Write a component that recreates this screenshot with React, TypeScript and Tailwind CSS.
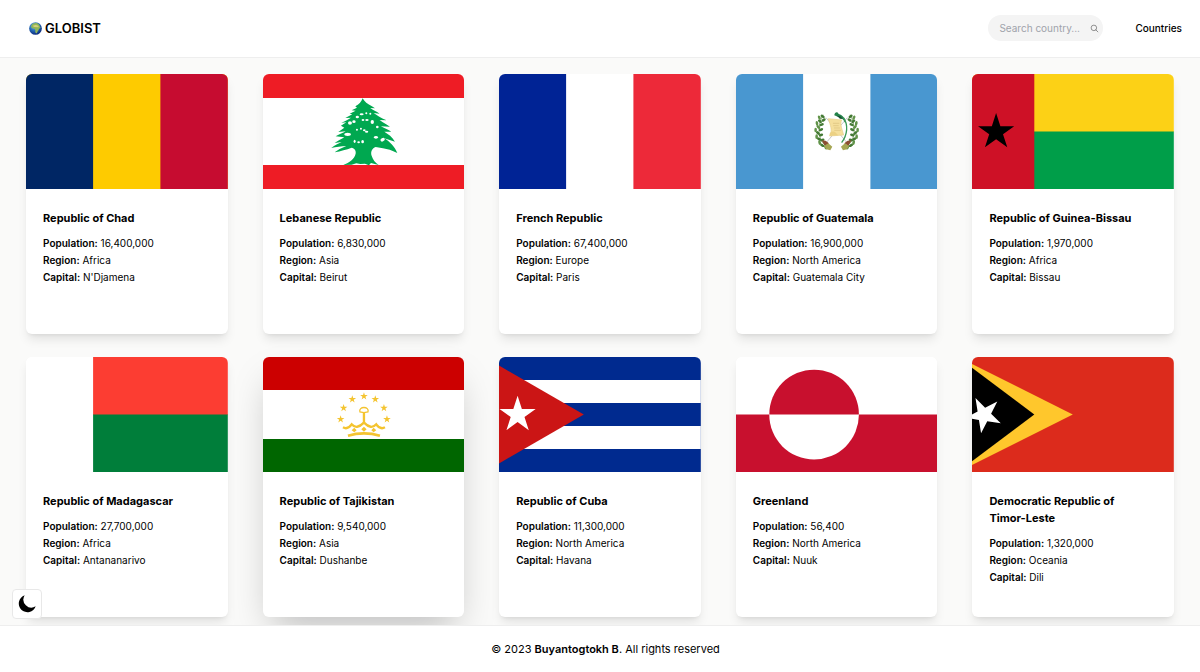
import type { ReactNode } from "react";
import { IoSearchOutline } from "react-icons/io5";

function starPoints(cx: number, cy: number, r: number, start = -90) {
  const points: string[] = [];
  for (let i = 0; i < 10; i++) {
    const radius = i % 2 === 0 ? r : r * 0.382;
    const angle = ((start + i * 36) * Math.PI) / 180;
    points.push(`${(cx + radius * Math.cos(angle)).toFixed(2)},${(cy + radius * Math.sin(angle)).toFixed(2)}`);
  }
  return points.join(" ");
}

function Flag({ label, children }: { label: string; children: ReactNode }) {
  return (
    <svg
      role="img"
      aria-label={label}
      viewBox="0 0 202 115"
      preserveAspectRatio="xMidYMid slice"
      className="block h-[115px] w-full rounded-t-md"
    >
      {children}
    </svg>
  );
}

function VerticalBands({ colors }: { colors: [string, string, string] }) {
  return (
    <>
      <rect width="202" height="115" fill={colors[1]} />
      <rect width="67.3" height="115" fill={colors[0]} />
      <rect x="134.6" width="67.4" height="115" fill={colors[2]} />
    </>
  );
}

function Lebanon() {
  return (
    <>
      <rect width="202" height="115" fill="#fff" />
      <rect width="202" height="24" fill="#ee1c25" />
      <rect y="91" width="202" height="24" fill="#ee1c25" />
      <g transform="translate(47.5 11) scale(.3333)">
        <path
          fill="#00a850"
          d="M157 40 C162 50 172 57 185 64 L194 70 L180 69 C188 76 198 79 208 86 L190 84 C202 92 208 97 218 101 L229 106 L208 105 C220 114 228 118 239 125 L212 124 C224 130 234 134 243 140 L222 140 C234 147 246 156 254 170 L222 160 C238 170 254 186 261 204 C244 196 232 192 218 190 L196 186 C186 190 180 200 184 212 C188 224 194 232 205 240 L182 234 L176 241 L164 236 L150 237 L138 235 L124 239 L99 240 C118 232 132 222 136 206 C138 196 132 190 124 188 C108 194 92 198 73 202 L88 192 L108 183 C92 184 78 186 63 189 C74 180 84 176 94 171 L73 174 C84 166 94 162 102 157 L76 154 C88 148 98 144 106 139 L84 141 L102 128 L92 122 L108 112 L93 113 C106 107 114 104 122 98 L105 99 L126 88 L118 86 L136 77 L124 76 L140 68 L135 64 C146 58 153 51 157 40 Z"
        />
        <g fill="#fff">
          <ellipse cx="112" cy="148" rx="10" ry="5" />
          <ellipse cx="119" cy="114" rx="6" ry="5" />
          <ellipse cx="131" cy="110" rx="5" ry="4" />
          <ellipse cx="141" cy="96" rx="5" ry="4" />
          <ellipse cx="154" cy="88" rx="6" ry="3" />
          <circle cx="168" cy="85" r="3" />
          <circle cx="180" cy="86" r="3" />
          <ellipse cx="158" cy="105" rx="4" ry="3" />
          <ellipse cx="170" cy="105" rx="5" ry="3" />
          <ellipse cx="186" cy="111" rx="5" ry="6" />
          <circle cx="201" cy="126" r="4" />
          <circle cx="140" cy="134" r="3" />
          <circle cx="152" cy="131" r="3" />
          <ellipse cx="162" cy="136" rx="4" ry="3" />
          <ellipse cx="169" cy="140" rx="5" ry="3" />
          <ellipse cx="197" cy="157" rx="6" ry="4" />
          <ellipse cx="217" cy="164" rx="7" ry="5" transform="rotate(-30 217 164)" />
          <ellipse cx="133" cy="169" rx="3" ry="5" />
          <ellipse cx="145" cy="172" rx="4" ry="3" />
          <ellipse cx="157" cy="170" rx="4" ry="5" />
        </g>
      </g>
    </>
  );
}

const laurelLeaves = [
  [76, 172, 20], [66, 166, 60], [58, 158, 15], [56, 147, 60], [49, 140, 0], [53, 129, 50],
  [46, 120, 0], [54, 111, 45], [50, 100, 10], [59, 94, 50], [57, 83, 20], [67, 79, 55],
  [66, 150, 110], [62, 135, 110], [62, 119, 110], [64, 104, 115], [70, 90, 120],
];

function Laurel() {
  return (
    <g>
      <path d="M88 174 C56 160 46 118 68 74" fill="none" stroke="#5b8b3f" strokeWidth="2" />
      {laurelLeaves.map(([x, y, angle]) => (
        <ellipse
          key={`${x}-${y}`}
          cx={x}
          cy={y}
          rx="4"
          ry="7"
          fill={angle > 45 ? "#447a35" : "#62944a"}
          transform={`rotate(${-angle} ${x} ${y})`}
        />
      ))}
    </g>
  );
}

function Guatemala() {
  return (
    <>
      <VerticalBands colors={["#4997d0", "#fff", "#4997d0"]} />
      <g transform="translate(64.5 16) scale(.3333)">
        <Laurel />
        <g transform="translate(218 0) scale(-1 1)">
          <Laurel />
        </g>
        <g stroke="#a9a9ae" strokeWidth="2" fill="none">
          <path d="M77 83 L140 158 M141 83 L78 158" />
        </g>
        <path d="M64 151 L76 152 L86 160 L74 168 Z M154 151 L142 152 L132 160 L144 168 Z" fill="#8b4d32" />
        <path d="M72 168 L84 160 L96 170 L90 181 L78 178 Z M146 168 L134 160 L122 170 L128 181 L140 178 Z" fill="#a6a653" />
        <path d="M84 86 L124 90 C118 104 126 118 130 135 L88 138 C98 122 90 106 84 86 Z" fill="#f5df9c" stroke="#e6cd88" strokeWidth="2" />
        <path d="M88 137 C86 128 94 122 104 126 L114 136" fill="#ecd184" />
        <path d="M98 100 H117 M99 107 H115 M101 114 H119 M102 121 H122" stroke="#d9bf7c" strokeWidth="2" />
        <path d="M102 76 C103 66 112 64 115 72 C128 76 136 85 134 98 C130 88 123 82 114 81 Z" fill="#24824a" />
        <path d="M130 84 C144 104 142 134 124 158" fill="none" stroke="#3b9a58" strokeWidth="4" />
        <path d="M110 77 L120 79 L128 87 L119 86 Z" fill="#174f34" />
      </g>
    </>
  );
}

function GuineaBissau() {
  return (
    <>
      <rect width="202" height="58" fill="#fcd116" />
      <rect y="57.5" width="202" height="57.5" fill="#009e49" />
      <rect width="62.5" height="115" fill="#ce1126" />
      <polygon points={starPoints(24.3, 58, 19)} fill="#000" />
    </>
  );
}

function Madagascar() {
  return (
    <>
      <rect width="202" height="115" fill="#fff" />
      <rect x="67.3" width="134.7" height="58" fill="#fc3d32" />
      <rect x="67.3" y="57.5" width="134.7" height="57.5" fill="#007e3a" />
    </>
  );
}

const crownStars = [
  [271, 208], [280, 174], [306, 148], [341, 139], [375, 148], [401, 174], [410, 208],
];

function Tajikistan() {
  return (
    <>
      <rect width="202" height="115" fill="#fff" />
      <rect width="202" height="33" fill="#c00" />
      <rect y="82" width="202" height="33" fill="#060" />
      <g transform="translate(-12.5 -7) scale(.3333)" fill="#f4c430">
        {crownStars.map(([x, y]) => (
          <polygon key={x} points={starPoints(x, y, 12)} />
        ))}
        <g fill="none" stroke="#f4c430">
          <path d="M293 257 Q341 243 389 257" strokeWidth="8" />
          <path d="M278 232 Q292 240 304 223 Q319 240 341 218 Q363 240 378 223 Q390 240 404 232" strokeWidth="7" />
          <path d="M341 188 V222" strokeWidth="7" />
          <path d="M329 186 C323 168 359 168 353 186 L341 188 Z" strokeWidth="4" />
        </g>
        <path d="M312 233 L319 241 L312 247 L304 241 Z M341 230 L349 238 L341 245 L333 238 Z M370 233 L378 241 L370 247 L363 241 Z" />
      </g>
    </>
  );
}

function Cuba() {
  return (
    <>
      <rect width="202" height="115" fill="#002a8f" />
      <rect y="23" width="202" height="23" fill="#fff" />
      <rect y="69" width="202" height="23" fill="#fff" />
      <path d="M0 8.5 L85 57.5 L0 106.5 Z" fill="#cb1515" />
      <polygon points={starPoints(18.8, 57.8, 19)} fill="#fff" />
    </>
  );
}

function Greenland() {
  return (
    <>
      <rect width="202" height="58" fill="#fff" />
      <rect y="57.5" width="202" height="57.5" fill="#c8102e" />
      <circle cx="78.3" cy="57.7" r="44.8" fill="#fff" />
      <path d="M33.5 57.5 A44.8 44.8 0 0 1 123.1 57.5 Z" fill="#c8102e" />
    </>
  );
}

function TimorLeste() {
  return (
    <>
      <rect width="202" height="115" fill="#dc2b1c" />
      <path d="M0 7 L101 57.5 L0 108 Z" fill="#ffc72c" />
      <path d="M0 10.5 L62.5 57.5 L0 104.5 Z" fill="#000" />
      <polygon points={starPoints(12.2, 57.8, 18.8, -45)} fill="#fff" />
    </>
  );
}

type Country = {
  name: string;
  population: string;
  region: string;
  capital: string;
  flag: ReactNode;
  raised?: boolean;
};

const countries: Country[] = [
  { name: "Republic of Chad", population: "16,400,000", region: "Africa", capital: "N'Djamena", flag: <VerticalBands colors={["#002664", "#fecb00", "#c60c30"]} /> },
  { name: "Lebanese Republic", population: "6,830,000", region: "Asia", capital: "Beirut", flag: <Lebanon /> },
  { name: "French Republic", population: "67,400,000", region: "Europe", capital: "Paris", flag: <VerticalBands colors={["#002395", "#fff", "#ed2939"]} /> },
  { name: "Republic of Guatemala", population: "16,900,000", region: "North America", capital: "Guatemala City", flag: <Guatemala /> },
  { name: "Republic of Guinea-Bissau", population: "1,970,000", region: "Africa", capital: "Bissau", flag: <GuineaBissau /> },
  { name: "Republic of Madagascar", population: "27,700,000", region: "Africa", capital: "Antananarivo", flag: <Madagascar /> },
  { name: "Republic of Tajikistan", population: "9,540,000", region: "Asia", capital: "Dushanbe", flag: <Tajikistan />, raised: true },
  { name: "Republic of Cuba", population: "11,300,000", region: "North America", capital: "Havana", flag: <Cuba /> },
  { name: "Greenland", population: "56,400", region: "North America", capital: "Nuuk", flag: <Greenland /> },
  { name: "Democratic Republic of Timor-Leste", population: "1,320,000", region: "Oceania", capital: "Dili", flag: <TimorLeste /> },
];

function Fact({ label, value }: { label: string; value: string }) {
  return (
    <p>
      <span className="font-semibold">{label}:</span> {value}
    </p>
  );
}

function CountryCard({ country }: { country: Country }) {
  return (
    <article
      className={
        country.raised
          ? "min-h-[260px] rounded-md bg-white shadow-[0_18px_36px_-9px_rgba(0,0,0,0.25)]"
          : "min-h-[260px] rounded-md bg-white shadow-[0_7px_11px_-2px_rgba(0,0,0,0.1),0_3px_4px_-3px_rgba(0,0,0,0.1)]"
      }
    >
      <Flag label={`Flag of ${country.name}`}>{country.flag}</Flag>
      <div className="px-[17px] pt-[21px]">
        <h2 className="pr-3 text-[11px] leading-[17px] font-bold">{country.name}</h2>
        <div className="mt-2 text-[10px] leading-[17px]">
          <Fact label="Population" value={country.population} />
          <Fact label="Region" value={country.region} />
          <Fact label="Capital" value={country.capital} />
        </div>
      </div>
    </article>
  );
}

function Globe() {
  return (
    <svg viewBox="0 0 39 39" aria-hidden="true" className="size-[13px]">
      <defs>
        <radialGradient id="ocean" cx="40%" cy="30%" r="70%">
          <stop offset="0" stopColor="#7cc4ee" />
          <stop offset=".55" stopColor="#2467b4" />
          <stop offset="1" stopColor="#0b2a7c" />
        </radialGradient>
      </defs>
      <circle cx="19.5" cy="19.5" r="19" fill="url(#ocean)" />
      <path d="M8 9 C12 4 18 2 25 4 L31 8 L33 14 L35 18 L30 20 C30 25 25 27 24 33 C20 35 18 31 19 25 L17 20 L9 19 L6 14 Z" fill="#8fb558" />
      <path d="M11 11 L21 8 L29 12 L28 16 L15 15 Z" fill="#d5cf7a" />
    </svg>
  );
}

function Moon() {
  return (
    <svg viewBox="0 0 54 54" aria-hidden="true" className="size-[18px]" fill="currentColor">
      <path d="M20 1 A26 26 0 1 0 53 34 A24 24 0 0 1 20 1 Z" />
    </svg>
  );
}

export default function App() {
  return (
    <div className="flex min-h-screen flex-col bg-[#fafaf9] font-['Inter',sans-serif] text-black">
      <header className="flex h-[58px] items-center justify-between border-b border-[#eeeeee] bg-white pr-[18px] pb-px pl-[29px]">
        <a href="#" className="flex items-center gap-[3px] text-[13px] leading-5 font-semibold">
          <Globe />
          GLOBIST
        </a>
        <nav className="flex items-center gap-8">
          <form role="search" className="flex h-[26px] w-[115px] items-center rounded-full bg-[#f4f4f4] pr-1 pl-[11px]">
            <input
              type="text"
              aria-label="Search country"
              placeholder="Search country..."
              className="w-full min-w-0 bg-transparent text-[10px] outline-none placeholder:text-[#a0a3ab]"
            />
            <button type="button" aria-label="Search" className="flex size-[10px] shrink-0 items-center justify-center text-[#444]">
              <IoSearchOutline className="size-[9px]" />
            </button>
          </form>
          <a href="#" className="text-[10px] leading-4 font-medium">
            Countries
          </a>
        </nav>
      </header>

      <main className="grid flex-1 grid-cols-[repeat(auto-fill,minmax(200px,1fr))] content-start gap-x-[35px] gap-y-[23px] px-[26px] pt-4 pb-2">
        {countries.map((country) => (
          <CountryCard key={country.name} country={country} />
        ))}
      </main>

      <footer className="sticky bottom-0 flex h-[47px] items-center justify-center border-t border-[#eeeeee] bg-white px-4 text-[11px]">
        <p className="pl-[11px]">
          © 2023 <span className="font-semibold">Buyantogtokh B</span>. All rights reserved
        </p>
      </footer>

      <button
        type="button"
        aria-label="Toggle dark mode"
        className="fixed bottom-[53px] left-3 flex size-[30px] items-center justify-center rounded border border-[#e8e8e8] bg-white"
      >
        <Moon />
      </button>
    </div>
  );
}
